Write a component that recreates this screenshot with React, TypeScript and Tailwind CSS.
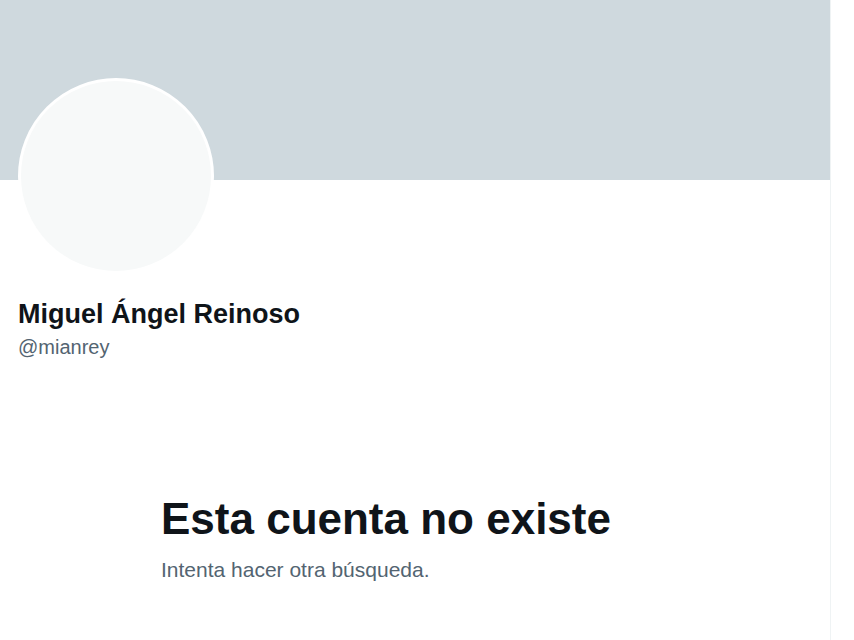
import React from "react";

export default function App() {
  return (
    <div className="w-[854px] h-[640px] bg-white overflow-hidden flex" style={{ fontFamily: '"Liberation Sans", Arial, sans-serif' }}>
      <div className="w-[831px] h-full border-r border-[#eff3f4] flex flex-col">
        <div className="h-[180px] bg-[#cfd9de] shrink-0" />
        <div className="pl-[18px] -mt-[102px]">
          <div className="w-[196px] h-[196px] rounded-full border-[3px] border-white bg-[#f7f9f9]" />
        </div>
        <div className="pl-[18px] mt-[24px]">
          <div className="text-[27px] leading-[32px] font-bold text-[#0f1419]">Miguel Ángel Reinoso</div>
          <div className="text-[20px] leading-[24px] text-[#536471] mt-[5px]">@mianrey</div>
        </div>
        <div className="pl-[161px] mt-[134px]">
          <div className="text-[44px] leading-[52px] font-extrabold text-[#0f1419]">Esta cuenta no existe</div>
          <div className="text-[21px] leading-[26px] text-[#536471] mt-[12px]">Intenta hacer otra búsqueda.</div>
        </div>
      </div>
    </div>
  );
}
